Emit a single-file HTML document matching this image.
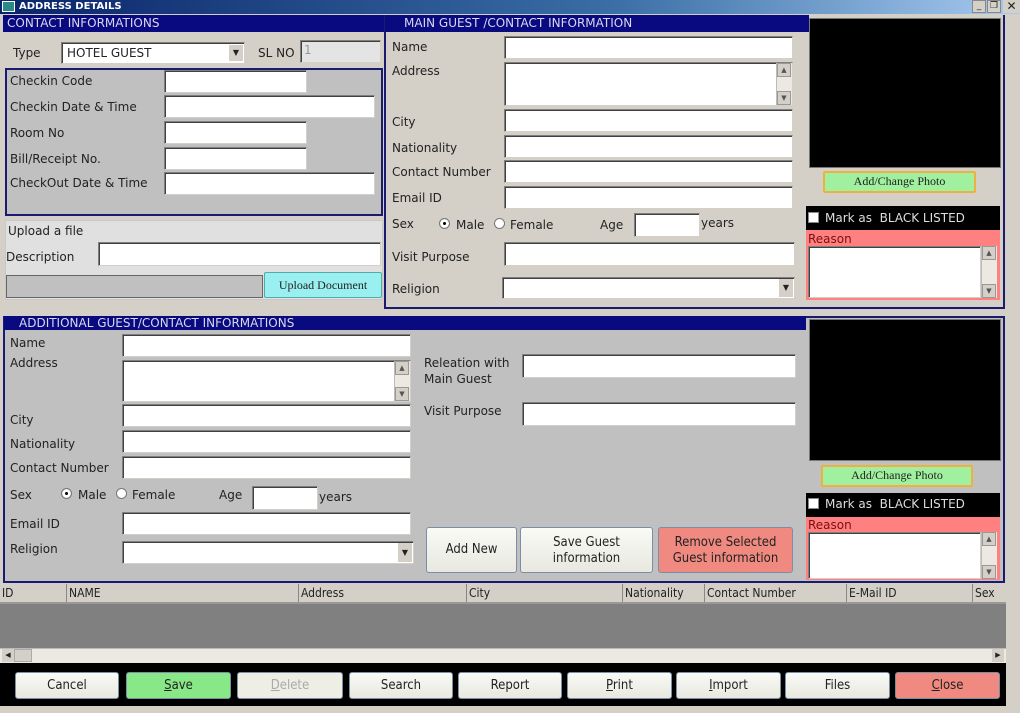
<!DOCTYPE html>
<html><head><meta charset="utf-8"><style>
*{box-sizing:border-box;margin:0;padding:0}
body{width:1020px;height:713px;overflow:hidden;background:#d4d0c8;font-family:"DejaVu Sans","Liberation Sans",sans-serif;font-size:12px;color:#222;position:relative}
div,span{position:absolute}
.l{white-space:nowrap;font-size:12px;color:#222}
.i{background:#fff;border:1px solid #808080;border-right-color:#d4d0c8;border-bottom-color:#d4d0c8;box-shadow:inset 1px 1px 0 #404040}
.hd{background:#0a0a80;color:#d8d8f0;font-size:12px;padding-left:4px;line-height:17px;white-space:nowrap}
.sb{background:#ece9e2;width:16px;border-left:1px solid #bbb}
.ar{width:14px;height:14px;background:#d4d0c8;border:1px solid #999;font-size:7px;text-align:center;line-height:12px;color:#555}
.btn{border:1px solid #7a8ea8;border-radius:3px;background:linear-gradient(#fafaf6,#e8e8e0);text-align:center;font-size:13px;color:#222;font-family:"DejaVu Sans Condensed","DejaVu Sans",sans-serif}
.rd{width:11px;height:11px;border-radius:50%;background:#fff;border:1px solid #777}
.pb{background:#a0f0a0;border:2px solid #f0b040;border-radius:2px;font-family:"Liberation Serif",serif;font-size:12px;text-align:center;line-height:17px;color:#222}
</style></head><body>
<!-- title -->
<div style="left:0;top:0;width:1020px;height:14px;background:linear-gradient(90deg,#0a246a,#3a6ea5 60%,#a6caf0)"></div>
<div style="left:2px;top:1px;width:13px;height:11px;background:#2a8a8a;border:1px solid #fff"></div>
<div class="l" style="left:19px;top:0;color:#fff;font-weight:bold;font-size:10px;line-height:13px">ADDRESS DETAILS</div>
<div style="left:972px;top:0;width:14px;height:13px;background:#d4d0c8;border:1px solid #888;font-size:9px;text-align:center;line-height:11px">_</div>
<div style="left:987px;top:0;width:14px;height:13px;background:#d4d0c8;border:1px solid #888;font-size:9px;text-align:center;line-height:11px">❐</div>
<div style="left:1003px;top:0;width:17px;height:13px;background:#d4d0c8;font-size:12px;text-align:center;line-height:12px;font-weight:bold">✕</div>

<!-- left top -->
<div class="hd" style="left:3px;top:15px;width:381px">CONTACT INFORMATIONS</div>
<div class="l" style="left:13px;top:46px">Type</div>
<div class="i" style="left:61px;top:42px;width:184px;height:22px"><span class="l" style="left:5px;top:3px">HOTEL GUEST</span><span style="right:1px;top:2px;width:14px;height:16px;background:#d4d0c8;font-size:8px;text-align:center;line-height:16px">▼</span></div>
<div class="l" style="left:258px;top:46px">SL NO</div>
<div class="i" style="left:300px;top:40px;width:81px;height:23px;background:#e4e4e4"><span class="l" style="left:3px;top:2px;color:#999">1</span></div>
<div style="left:5px;top:68px;width:378px;height:148px;background:#c0c0c0;border:2px solid #1a1a70"></div>
<div class="l" style="left:10px;top:74px">Checkin Code</div><div class="i" style="left:164px;top:70px;width:143px;height:23px"></div>
<div class="l" style="left:10px;top:100px">Checkin Date &amp; Time</div><div class="i" style="left:164px;top:95px;width:211px;height:23px"></div>
<div class="l" style="left:10px;top:126px">Room No</div><div class="i" style="left:164px;top:121px;width:143px;height:23px"></div>
<div class="l" style="left:10px;top:152px">Bill/Receipt No.</div><div class="i" style="left:164px;top:147px;width:143px;height:23px"></div>
<div class="l" style="left:10px;top:176px">CheckOut Date &amp; Time</div><div class="i" style="left:164px;top:172px;width:211px;height:23px"></div>
<div style="left:5px;top:220px;width:378px;height:80px;background:#e0e0e0;border:1px solid #c8c8c8"></div>
<div class="l" style="left:8px;top:224px">Upload a file</div>
<div class="l" style="left:6px;top:250px">Description</div>
<div class="i" style="left:98px;top:242px;width:283px;height:24px"></div>
<div style="left:6px;top:275px;width:257px;height:23px;background:#c0c0c0;border:1px solid #666"></div>
<div style="left:264px;top:272px;width:118px;height:26px;background:#9af0f0;border:1px solid #5aa;border-radius:2px;font-family:'Liberation Serif',serif;font-size:12px;text-align:center;line-height:24px">Upload Document</div>

<!-- main guest -->
<div style="left:384px;top:15px;width:621px;height:294px;border:2px solid #1a1a70;border-top:none"></div>
<div class="hd" style="left:385px;top:15px;width:424px;padding-left:19px">MAIN GUEST /CONTACT INFORMATION</div>
<div class="l" style="left:392px;top:40px">Name</div><div class="i" style="left:504px;top:36px;width:289px;height:23px"></div>
<div class="l" style="left:392px;top:64px">Address</div><div class="i" style="left:504px;top:62px;width:289px;height:44px"><span class="sb" style="right:0;top:0;height:42px"><span class="ar" style="left:0;top:0">▲</span><span class="ar" style="left:0;bottom:0">▼</span></span></div>
<div class="l" style="left:392px;top:115px">City</div><div class="i" style="left:504px;top:109px;width:289px;height:23px"></div>
<div class="l" style="left:392px;top:141px">Nationality</div><div class="i" style="left:504px;top:135px;width:289px;height:23px"></div>
<div class="l" style="left:392px;top:165px">Contact Number</div><div class="i" style="left:504px;top:160px;width:289px;height:23px"></div>
<div class="l" style="left:392px;top:191px">Email ID</div><div class="i" style="left:504px;top:186px;width:289px;height:23px"></div>
<div class="l" style="left:392px;top:217px">Sex</div>
<div class="rd" style="left:439px;top:218px;box-shadow:inset 0 0 0 3px #fff,inset 0 0 0 6px #000"></div><div class="l" style="left:456px;top:218px">Male</div>
<div class="rd" style="left:494px;top:218px"></div><div class="l" style="left:510px;top:218px">Female</div>
<div class="l" style="left:600px;top:218px">Age</div><div class="i" style="left:634px;top:213px;width:66px;height:24px"></div><div class="l" style="left:701px;top:216px">years</div>
<div class="l" style="left:392px;top:250px">Visit Purpose</div><div class="i" style="left:504px;top:242px;width:291px;height:24px"></div>
<div class="l" style="left:392px;top:282px">Religion</div><div class="i" style="left:502px;top:277px;width:293px;height:22px"><span style="right:1px;top:1px;width:14px;height:18px;background:#d4d0c8;font-size:8px;text-align:center;line-height:18px">▼</span></div>
<div style="left:809px;top:18px;width:192px;height:150px;background:#000;border:1px solid #777"></div>
<div class="pb" style="left:823px;top:171px;width:153px;height:22px">Add/Change Photo</div>
<div style="left:806px;top:206px;width:194px;height:24px;background:#000"></div>
<div style="left:808px;top:212px;width:11px;height:11px;background:#fff;border:1px solid #888"></div>
<div class="l" style="left:825px;top:211px;color:#ddd">Mark as&nbsp; BLACK LISTED</div>
<div style="left:806px;top:230px;width:194px;height:70px;background:#ff8080"></div>
<div class="l" style="left:808px;top:232px;color:#7a1010">Reason</div>
<div class="i" style="left:808px;top:246px;width:173px;height:52px"></div>
<div class="sb" style="left:981px;top:246px;height:52px"><span class="ar" style="left:0;top:0">▲</span><span class="ar" style="left:0;bottom:0">▼</span></div>

<!-- additional -->
<div style="left:3px;top:316px;width:1002px;height:267px;background:#c0c0c0;border:2px solid #1a1a70"></div>
<div class="hd" style="left:4px;top:316px;width:802px;padding-left:15px;line-height:14px;height:14px">ADDITIONAL GUEST/CONTACT INFORMATIONS</div>
<div class="l" style="left:10px;top:336px">Name</div><div class="i" style="left:122px;top:334px;width:289px;height:23px"></div>
<div class="l" style="left:10px;top:356px">Address</div><div class="i" style="left:122px;top:360px;width:289px;height:42px"><span class="sb" style="right:0;top:0;height:40px"><span class="ar" style="left:0;top:0">▲</span><span class="ar" style="left:0;bottom:0">▼</span></span></div>
<div class="l" style="left:10px;top:413px">City</div><div class="i" style="left:122px;top:404px;width:289px;height:23px"></div>
<div class="l" style="left:10px;top:437px">Nationality</div><div class="i" style="left:122px;top:430px;width:289px;height:23px"></div>
<div class="l" style="left:10px;top:461px">Contact Number</div><div class="i" style="left:122px;top:456px;width:289px;height:23px"></div>
<div class="l" style="left:10px;top:488px">Sex</div>
<div class="rd" style="left:61px;top:488px;box-shadow:inset 0 0 0 3px #fff,inset 0 0 0 6px #000"></div><div class="l" style="left:78px;top:488px">Male</div>
<div class="rd" style="left:116px;top:488px"></div><div class="l" style="left:132px;top:488px">Female</div>
<div class="l" style="left:219px;top:488px">Age</div><div class="i" style="left:252px;top:486px;width:66px;height:24px"></div><div class="l" style="left:319px;top:490px">years</div>
<div class="l" style="left:10px;top:517px">Email ID</div><div class="i" style="left:122px;top:512px;width:289px;height:23px"></div>
<div class="l" style="left:10px;top:542px">Religion</div><div class="i" style="left:122px;top:541px;width:292px;height:23px"><span style="right:1px;top:1px;width:14px;height:19px;background:#d4d0c8;font-size:8px;text-align:center;line-height:19px">▼</span></div>
<div class="l" style="left:424px;top:356px">Releation with</div><div class="l" style="left:424px;top:372px">Main Guest</div>
<div class="i" style="left:522px;top:354px;width:274px;height:24px"></div>
<div class="l" style="left:424px;top:404px">Visit Purpose</div><div class="i" style="left:522px;top:402px;width:274px;height:24px"></div>
<div class="btn" style="left:426px;top:527px;width:91px;height:46px;line-height:44px">Add New</div>
<div class="btn" style="left:520px;top:527px;width:133px;height:46px;padding-top:7px;line-height:16px">Save Guest<br>information</div>
<div class="btn" style="left:658px;top:527px;width:135px;height:46px;padding-top:7px;line-height:16px;background:#f08a80">Remove Selected<br>Guest information</div>
<div style="left:809px;top:319px;width:192px;height:142px;background:#000;border:1px solid #777"></div>
<div class="pb" style="left:821px;top:465px;width:152px;height:22px">Add/Change Photo</div>
<div style="left:806px;top:493px;width:194px;height:24px;background:#000"></div>
<div style="left:808px;top:498px;width:11px;height:11px;background:#fff;border:1px solid #888"></div>
<div class="l" style="left:825px;top:497px;color:#ddd">Mark as&nbsp; BLACK LISTED</div>
<div style="left:806px;top:517px;width:194px;height:63px;background:#ff8080"></div>
<div class="l" style="left:808px;top:518px;color:#7a1010">Reason</div>
<div class="i" style="left:808px;top:532px;width:173px;height:47px"></div>
<div class="sb" style="left:981px;top:532px;height:47px"><span class="ar" style="left:0;top:0">▲</span><span class="ar" style="left:0;bottom:0">▼</span></div>

<!-- grid -->
<div style="left:0;top:584px;width:1006px;height:20px;background:#d4d0c8;border-bottom:2px solid #999;font-family:'DejaVu Sans Condensed','DejaVu Sans',sans-serif;font-size:12px">
<span style="left:2px;top:2px">ID</span><span style="left:66px;top:0;height:18px;border-left:1px solid #888;padding:2px 2px">NAME</span>
<span style="left:298px;top:0;height:18px;border-left:1px solid #888;padding:2px 2px">Address</span>
<span style="left:466px;top:0;height:18px;border-left:1px solid #888;padding:2px 2px">City</span>
<span style="left:622px;top:0;height:18px;border-left:1px solid #888;padding:2px 2px">Nationality</span>
<span style="left:704px;top:0;height:18px;border-left:1px solid #888;padding:2px 2px">Contact Number</span>
<span style="left:846px;top:0;height:18px;border-left:1px solid #888;padding:2px 2px">E-Mail ID</span>
<span style="left:972px;top:0;height:18px;border-left:1px solid #888;padding:2px 2px">Sex</span></div>
<div style="left:0;top:604px;width:1006px;height:44px;background:#808080"></div>
<div style="left:0;top:648px;width:1006px;height:15px;background:#ece9e2;border-top:1px solid #bbb"></div>
<div style="left:2px;top:649px;width:12px;height:13px;background:#d4d0c8;font-size:7px;line-height:13px;text-align:center">◀</div>
<div style="left:14px;top:649px;width:18px;height:13px;background:#d4d0c8;border:1px solid #aaa"></div>
<div style="left:992px;top:649px;width:12px;height:13px;background:#d4d0c8;font-size:7px;line-height:13px;text-align:center">▶</div>
<div style="left:0;top:663px;width:1006px;height:43px;background:#000"></div>
<div class="btn" style="left:15px;top:672px;width:104px;height:27px;line-height:25px">Cancel</div>
<div class="btn" style="left:126px;top:672px;width:105px;height:27px;line-height:25px;background:#88e888"><u>S</u>ave</div>
<div class="btn" style="left:237px;top:672px;width:106px;height:27px;line-height:25px;color:#aaa;background:#eeeee4"><u>D</u>elete</div>
<div class="btn" style="left:349px;top:672px;width:104px;height:27px;line-height:25px">Search</div>
<div class="btn" style="left:458px;top:672px;width:104px;height:27px;line-height:25px">Report</div>
<div class="btn" style="left:567px;top:672px;width:105px;height:27px;line-height:25px"><u>P</u>rint</div>
<div class="btn" style="left:676px;top:672px;width:105px;height:27px;line-height:25px"><u>I</u>mport</div>
<div class="btn" style="left:785px;top:672px;width:105px;height:27px;line-height:25px">Files</div>
<div class="btn" style="left:895px;top:672px;width:105px;height:27px;line-height:25px;background:#f08a80"><u>C</u>lose</div>
</body></html>
